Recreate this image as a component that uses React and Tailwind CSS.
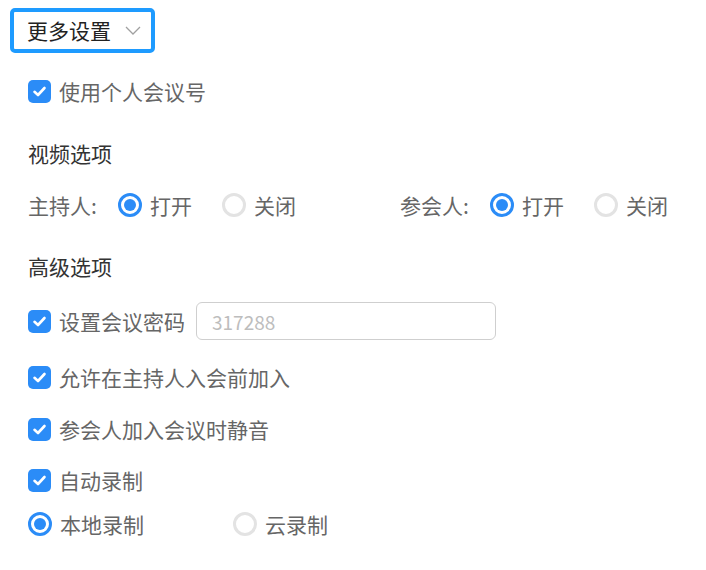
import React from 'react';

const Checkbox = ({ label }) => (
  <label className="flex items-center gap-2 h-10 shrink-0">
    <span className="w-[23px] h-[23px] rounded-[5px] bg-[#2b8cf7] flex items-center justify-center">
      <svg width="15" height="15" viewBox="0 0 15 15" fill="none">
        <path d="M2.5 7.8 L6 11 L12.5 4" stroke="#fff" strokeWidth="2.6" strokeLinecap="round" strokeLinejoin="round" />
      </svg>
    </span>
    <span className="text-[21px] text-[#666]">{label}</span>
  </label>
);

const Radio = ({ label, checked, width }) => (
  <label className={`flex items-center gap-2 shrink-0 ${width}`}>
    {checked ? (
      <span className="w-6 h-6 rounded-full border-[3px] border-[#2b8cf7] flex items-center justify-center">
        <span className="w-3 h-3 rounded-full bg-[#2b8cf7]"></span>
      </span>
    ) : (
      <span className="w-6 h-6 rounded-full border-[3px] border-[#e3e3e3]"></span>
    )}
    <span className="text-[21px] text-[#666]">{label}</span>
  </label>
);

const RadioGroup = ({ label, value }) => (
  <div className="flex items-center w-[372px] shrink-0">
    <span className="w-[90px] shrink-0 text-[21px] text-[#666]">{label}</span>
    <Radio label="打开" checked={value} width="w-[104px]" />
    <Radio label="关闭" checked={!value} width="w-[104px]" />
  </div>
);

const App = () => {
  return (
    <div className="bg-white w-[706px] h-[570px] pt-2 leading-none overflow-hidden" style={{ fontFamily: '"Noto Sans CJK SC", "Noto Sans", sans-serif' }}>
      <div className="pl-[10px]">
        <div className="w-[145px] h-[45px] border-4 border-[#1e9bff] rounded-[5px] flex items-center justify-between pl-[13px] pr-[10px]">
          <span className="text-[21px] text-[#222]">更多设置</span>
          <svg width="16" height="9" viewBox="0 0 16 9" fill="none">
            <path d="M1 1 L8 8 L15 1" stroke="#a0a0a0" strokeWidth="1.3" />
          </svg>
        </div>
      </div>

      <div className="pl-7">
        <div className="mt-[18px]">
          <Checkbox label="使用个人会议号" />
        </div>

        <div className="mt-[22px] h-10 flex items-center text-[21px] text-[#333]">视频选项</div>

        <div className="mt-3 h-10 flex items-center">
          <RadioGroup label="主持人:" value={true} />
          <RadioGroup label="参会人:" value={true} />
        </div>

        <div className="mt-[21px] h-10 flex items-center text-[21px] text-[#333]">高级选项</div>

        <div className="mt-[15px] flex items-center gap-[11px] h-10">
          <Checkbox label="设置会议密码" />
          <div className="w-[300px] h-[38px] shrink-0 border border-[#cfcfcf] rounded-md flex items-center px-[15px]">
            <span className="text-[19px] text-[#bdbdbd]">317288</span>
          </div>
        </div>

        <div className="mt-4">
          <Checkbox label="允许在主持人入会前加入" />
        </div>
        <div className="mt-3">
          <Checkbox label="参会人加入会议时静音" />
        </div>
        <div className="mt-[11px]">
          <Checkbox label="自动录制" />
        </div>

        <div className="mt-1 h-10 flex items-center">
          <Radio label="本地录制" checked width="w-[205px]" />
          <Radio label="云录制" checked={false} width="w-[205px]" />
        </div>
      </div>
    </div>
  );
};

export default App;
